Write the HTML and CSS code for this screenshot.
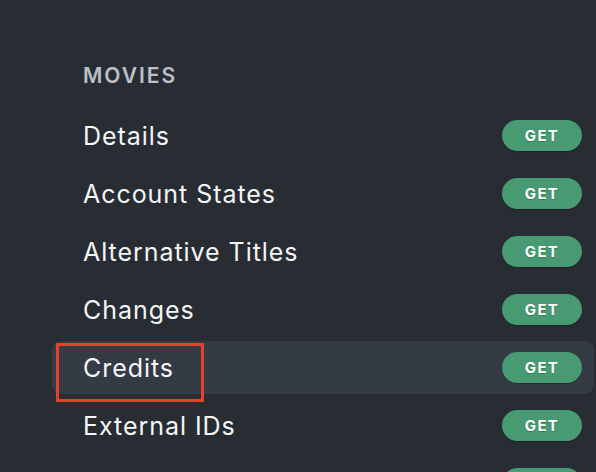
FILE: index.html
```html
<!DOCTYPE html>
<html>
  <head>
    <meta charset="UTF-8" />
    <meta name="viewport" content="width=device-width, initial-scale=1.0" />
    <title>Movies</title>
    <link rel="stylesheet" href="styles.css">
  </head>
  <body>
    <div class="sidebar">
      <h3 class="section-title">MOVIES</h3>
      <ul class="endpoints">
        <li class="endpoint"><span class="name">Details</span><span class="method">GET</span></li>
        <li class="endpoint"><span class="name">Account States</span><span class="method">GET</span></li>
        <li class="endpoint"><span class="name">Alternative Titles</span><span class="method">GET</span></li>
        <li class="endpoint"><span class="name">Changes</span><span class="method">GET</span></li>
        <li class="endpoint active">
          <span class="name">Credits</span><span class="method">GET</span>
          <!-- annotation box -->
          <span class="mark"></span>
        </li>
        <li class="endpoint"><span class="name">External IDs</span><span class="method">GET</span></li>
        <li class="endpoint"><span class="name">Images</span><span class="method">GET</span></li>
      </ul>
    </div>
  </body>
</html>
```

FILE: styles.css
```css
html, body {
  margin: 0;
  height: 100%;
  overflow: hidden;
}
body {
  background: #272d33;
  font-family: Inter, "Noto Sans", sans-serif;
  color: #f4f5f6;
}
.sidebar {
  padding: 63px 2px 0 52px;
}
.section-title {
  margin: 0 0 20px 31px;
  font-size: 21px;
  line-height: 26px;
  font-weight: 600;
  letter-spacing: 2px;
  color: #bcc0c8;
}
.endpoints {
  list-style: none;
  margin: 0;
  padding: 0;
  display: flex;
  flex-direction: column;
  gap: 5px;
}
.endpoint {
  position: relative;
  height: 53px;
  display: flex;
  align-items: center;
  justify-content: space-between;
  padding: 0 12px 0 31px;
  border-radius: 9px;
}
.endpoint.active {
  background: #343b44;
}
.name {
  font-size: 25px;
  font-weight: 400;
  letter-spacing: 0.95px;
}
.method {
  width: 80px;
  height: 31px;
  border-radius: 16px;
  background: #489a73;
  box-shadow: 0 1px 1px rgba(0, 0, 0, 0.25);
  display: flex;
  align-items: center;
  justify-content: center;
  font-size: 15px;
  font-weight: 700;
  letter-spacing: 1.3px;
  color: #fff;
  text-shadow: 0 1px 1px rgba(0, 0, 0, 0.2);
}
.mark {
  position: absolute;
  left: 4px;
  top: 2px;
  width: 142px;
  height: 53px;
  border: 3px solid #e8402b;
}
```
